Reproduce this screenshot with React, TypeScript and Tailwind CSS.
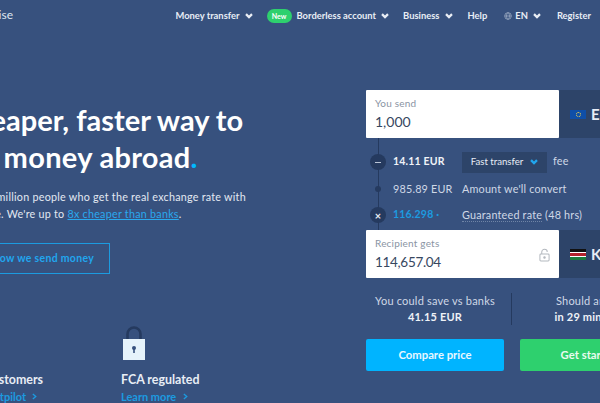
const navItem = "flex items-center gap-[5px] text-[9.4px] font-bold text-[#e8edf5] whitespace-nowrap";

const Chevron = ({ className = "" }: { className?: string }) => (
  <svg viewBox="0 0 10 8" className={`w-[8px] h-[6px] ${className}`} fill="none" stroke="currentColor" strokeWidth="3">
    <path d="M1 1.5 L5 5.5 L9 1.5" />
  </svg>
);

const SmallArrow = () => (
  <svg viewBox="0 0 6 8" className="w-[5px] h-[7px]" fill="none" stroke="currentColor" strokeWidth="1.6">
    <path d="M1 1 L4.5 4 L1 7" />
  </svg>
);

const Navbar = () => (
  <nav className="flex items-center h-[31px] pt-[1px] pr-[9px]">
    <span className="ml-[-64px] w-[77px] text-right text-[12px] text-[#dfe6f0] mb-[3px] whitespace-nowrap">TransferWise</span>
    <div className="flex items-center ml-auto">
      <a className={navItem}>Money transfer <Chevron /></a>
      <span className="ml-[14px] w-[25px] h-[14px] rounded-full bg-[#2ed06e] text-white text-[7px] font-bold flex items-center justify-center">New</span>
      <a className={`${navItem} ml-[5px]`}>Borderless account <Chevron /></a>
      <a className={`${navItem} ml-[14px]`}>Business <Chevron /></a>
      <a className={`${navItem} ml-[15px]`}>Help</a>
      <a className={`${navItem} ml-[17px]`}>
        <svg viewBox="0 0 12 12" className="w-[8px] h-[8px] text-[#a9b6cc]" fill="none" stroke="currentColor" strokeWidth="1">
          <circle cx="6" cy="6" r="5" />
          <ellipse cx="6" cy="6" rx="2.2" ry="5" />
          <path d="M1 6 H11" />
        </svg>
        <span className="ml-[-2px]">EN</span> <Chevron />
      </a>
      <a className={`${navItem} ml-[16px]`}>Register</a>
    </div>
  </nav>
);

const Hero = () => (
  <div className="w-[370px] ml-[-62px] shrink-0 pt-[70px]">
    <h1 className="text-[29px] leading-[37px] font-bold text-white whitespace-nowrap">
      <span className="ml-[-4px]">A cheaper, faster way to</span>
      <br />
      <span className="ml-[-4px] tracking-[0.3px]">send money abroad</span><span className="text-[#00b9ff]">.</span>
    </h1>
    <p className="mt-[13px] text-[10.75px] leading-[17px] text-[#e3e9f2] whitespace-nowrap tracking-[0.25px]">
      <span className="ml-[26px]">Join 4 million people who get the real exchange rate with</span>
      <br />
      <span className="ml-[-2px]">TransferWise. We're up to </span>
      <a className="text-[#2aa9ef] underline">8x cheaper than banks</a>.
    </p>
    <a className="mt-[21px] flex items-center justify-end pr-[15px] w-[172px] h-[31px] border border-[#1c9be0] text-[10.5px] font-bold text-[#21a6ee] tracking-[0.3px]">
      See how we send money
    </a>
    <div className="mt-[51px] flex">
      <div className="w-[183px] pt-[46px] pr-[78px] flex flex-col items-end">
        <p className="text-[12.4px] leading-[18px] font-bold text-[#e8edf5] whitespace-nowrap">2M customers</p>
        <p className="mr-[6px] flex items-center gap-[6px] text-[11px] leading-[15px] font-bold text-[#1c9be0] whitespace-nowrap">
          Rated on Trustpilot <SmallArrow />
        </p>
      </div>
      <div>
        <svg viewBox="0 0 24 36" className="ml-[1px] w-[24px] h-[36px]">
          <path d="M5.5 17 V9 a6.5 6.5 0 0 1 13 0 V17" fill="none" stroke="#253a5f" strokeWidth="2.6" />
          <rect x="1" y="14" width="22" height="21" fill="#e6f3fb" />
          <circle cx="12" cy="23" r="2" fill="#37517e" />
          <rect x="11.2" y="23" width="1.6" height="5" fill="#37517e" />
        </svg>
        <p className="mt-[10px] text-[12.4px] leading-[18px] font-bold text-[#e8edf5] whitespace-nowrap">FCA regulated</p>
        <p className="flex items-center gap-[7px] text-[11px] leading-[15px] font-bold text-[#1c9be0] whitespace-nowrap">
          Learn more <SmallArrow />
        </p>
      </div>
    </div>
  </div>
);

const AmountField = ({ label, value, locked }: { label: string; value: string; locked?: boolean }) => (
  <div className="relative w-[193px] h-[48px] bg-white rounded-[1px] pl-[9px] pt-[7px] shrink-0">
    <p className="text-[10px] leading-[12px] text-[#8a94a3] tracking-[0.2px]">{label}</p>
    <p className={`mt-[3px] leading-[20px] text-[#37475f] ${locked ? "text-[13.5px] tracking-[-0.3px]" : "text-[14px]"}`}>{value}</p>
    {locked && (
      <svg viewBox="0 0 12 14" className="absolute right-[9px] top-[18px] w-[11px] h-[14px] text-[#b4b9bf]" fill="none" stroke="currentColor" strokeWidth="1.1">
        <path d="M3 6 V3.8 a3 3 0 0 1 6 0" />
        <rect x="1" y="6" width="10" height="7.5" rx="1" />
        <circle cx="6" cy="9.7" r="0.8" fill="currentColor" />
      </svg>
    )}
  </div>
);

const CurrencyTab = ({ code, children }: { code: string; children: React.ReactNode }) => (
  <div className="flex-1 h-[48px] bg-[#2d4469] flex items-center pl-[11px] gap-[5px] text-[15px] font-bold text-[#e8edf5]">
    {children}
    {code}
  </div>
);

const TimelineRow = ({ dot, amount, amountClass, children }: { dot: React.ReactNode; amount: string; amountClass: string; children: React.ReactNode }) => (
  <div className="flex items-center h-[26.5px] text-[10.8px] tracking-[0.2px] text-[#cfd8e6]">
    <div className="w-[27px] pl-[4px] h-[16px] flex items-center shrink-0">
      <div className="w-[16px] flex justify-center">{dot}</div>
    </div>
    <span className={`w-[69px] shrink-0 whitespace-nowrap ${amountClass}`}>{amount}</span>
    {children}
  </div>
);

const Calculator = () => (
  <div className="w-[320px] shrink-0 ml-[58px] pt-[59px]">
    <div className="flex">
      <AmountField label="You send" value="1,000" />
      <CurrencyTab code="EUR">
        <span className="w-[16px] h-[9px] bg-[#0f4fa8] flex items-center justify-center">
          <span className="w-[5px] h-[5px] rounded-full border border-dotted border-[#f6d54a]" />
        </span>
      </CurrencyTab>
    </div>
    <div className="relative w-[193px] pt-[11px] h-[92px]">
      <div className="absolute left-[12px] top-0 bottom-0 w-[1px] bg-[#253a5f]" />
      <div className="relative w-[320px]">
        <TimelineRow
          amount="14.11 EUR"
          amountClass="font-bold text-[#f0f3f8] text-[10.5px]"
          dot={<span className="w-[16px] h-[16px] rounded-full bg-[#253a5f] flex items-center justify-center"><span className="w-[6px] h-[1.5px] bg-[#b9c4d6]" /></span>}
        >
          <span className="w-[85px] h-[21px] bg-[#2d4469] flex items-center justify-center gap-[7px] text-[9.6px] text-[#e8edf5] tracking-normal">
            Fast transfer <Chevron className="text-[#21a6ee]" />
          </span>
          <span className="ml-[6px] mb-[2px]">fee</span>
        </TimelineRow>
        <TimelineRow
          amount="985.89 EUR"
          amountClass=""
          dot={<span className="w-[6px] h-[6px] rounded-full bg-[#253a5f]" />}
        >
          <span>Amount we'll convert</span>
        </TimelineRow>
        <TimelineRow
          amount="116.298 ·"
          amountClass="font-bold text-[#1c9be0] text-[10.5px]"
          dot={<span className="w-[16px] h-[16px] rounded-full bg-[#253a5f] flex items-center justify-center text-[11px] leading-none font-bold text-[#e8edf5]">×</span>}
        >
          <span className="border-b border-dotted border-[#6f84a6] leading-[13px]">Guaranteed rate</span>
          <span className="ml-[3px]">(48 hrs)</span>
        </TimelineRow>
      </div>
    </div>
    <div className="flex">
      <AmountField label="Recipient gets" value="114,657.04" locked />
      <CurrencyTab code="KES">
        <span className="w-[16px] h-[11px] flex flex-col relative overflow-hidden">
          <span className="flex-1 bg-[#111]" />
          <span className="flex-1 bg-[#b3212c] border-y border-white" />
          <span className="flex-1 bg-[#1c7a3e]" />
        </span>
      </CurrencyTab>
    </div>
    <div className="flex h-[32px] mt-[15px] text-[11px] leading-[16px] text-[#cfd8e6] text-center whitespace-nowrap tracking-[0.2px]">
      <div className="w-[138px] shrink-0">
        You could save vs banks
        <p className="font-bold text-[11px] text-[#eef2f7]">41.15 EUR</p>
      </div>
      <div className="w-[1px] h-[32px] bg-[#253a5f] ml-[7px] mr-[8px]" />
      <div className="w-[138px] shrink-0">
        Should arrive
        <p className="font-bold text-[11px] text-[#eef2f7]">in 29 minutes</p>
      </div>
    </div>
    <div className="flex gap-[16px] mt-[14px]">
      <a className="w-[138px] h-[32px] rounded-[2px] bg-[#00b4ff] flex items-center justify-center text-[11.3px] font-bold text-[#e8f7ff]">Compare price</a>
      <a className="w-[138px] h-[32px] rounded-[2px] bg-[#2ed06e] flex items-center justify-center text-[11.3px] font-bold text-[#e8fbef]">Get started</a>
    </div>
  </div>
);

export default function App() {
  return (
    <div className="w-[600px] h-[403px] overflow-hidden bg-[#37517e] font-['Lato',sans-serif]">
      <Navbar />
      <main className="flex">
        <Hero />
        <Calculator />
      </main>
    </div>
  );
}
